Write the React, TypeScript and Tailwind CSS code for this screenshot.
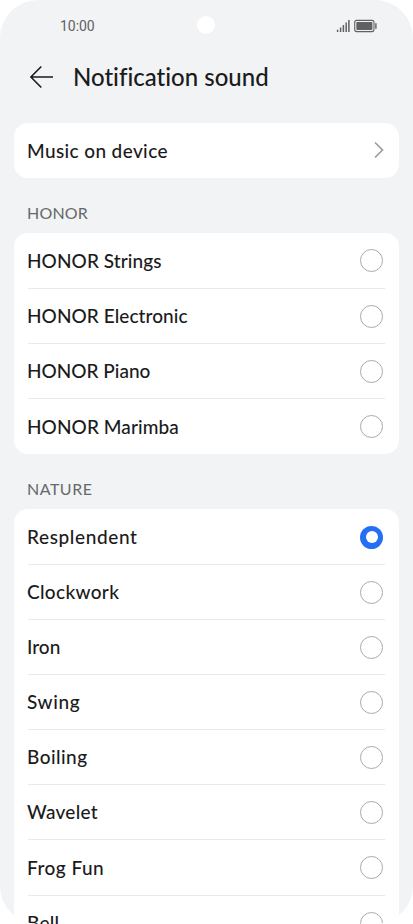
const groups = [
  {
    title: 'HONOR',
    track: 'tracking-[0.2px]',
    items: [
      { name: 'HONOR Strings', track: 'tracking-[0.08px]' },
      { name: 'HONOR Electronic', track: 'tracking-[0.06px]' },
      { name: 'HONOR Piano', track: '' },
      { name: 'HONOR Marimba', track: 'tracking-[0.08px]' },
    ],
  },
  {
    title: 'NATURE',
    track: 'tracking-[0.5px]',
    items: [
      { name: 'Resplendent', track: 'tracking-[0.62px]' },
      { name: 'Clockwork', track: 'tracking-[0.33px]' },
      { name: 'Iron', track: '' },
      { name: 'Swing', track: 'tracking-[0.6px]' },
      { name: 'Boiling', track: 'tracking-[0.45px]' },
      { name: 'Wavelet', track: 'tracking-[0.28px]' },
      { name: 'Frog Fun', track: 'tracking-[0.48px]' },
      { name: 'Bell', track: 'tracking-[0.2px]' },
    ],
  },
];

function StatusBar() {
  return (
    <header className="relative flex h-[50px] items-center justify-between pl-[60px] pr-[36px] text-[#606163]">
      <span className="pt-[2px] font-['Roboto',sans-serif] text-[14px] font-normal leading-5 tracking-[-0.05px]">10:00</span>
      <span className="absolute left-[197px] top-[16px] size-[18px] rounded-full bg-white" />
      <svg className="mt-[2px]" width="41" height="14" viewBox="0 0 41 14" fill="none">
        <path d="M1.6 10.7V13M4.6 8.5V13M7.4 6V13M10.2 3.5V13M12.9 1V13" stroke="currentColor" strokeWidth="1.5" />
        <rect x="18.7" y="1.4" width="19.3" height="11.2" rx="2" stroke="currentColor" strokeWidth="1.1" />
        <rect x="20.3" y="3.1" width="16.1" height="7.8" rx="0.8" fill="currentColor" />
        <path d="M39.9 4.2V9.8" stroke="currentColor" strokeWidth="1.4" />
      </svg>
    </header>
  );
}

function Radio({ checked }: { checked: boolean }) {
  return checked ? (
    <span className="mt-[0.7px] flex size-[23px] shrink-0 items-center justify-center rounded-full bg-[#256ff5]">
      <span className="size-[12px] rounded-full bg-white" />
    </span>
  ) : (
    <span className="mt-[0.7px] size-[23px] shrink-0 rounded-full border border-[#aaaaaa]" />
  );
}

export default function App() {
  return (
    <div className="h-[924px] w-[413px] overflow-hidden bg-white">
      <main className="h-full overflow-hidden rounded-[38px] bg-[#f1f3f5] font-['Lato',sans-serif] text-[19px] font-medium text-[#1b1b1c] [font-variant-ligatures:none]">
        <StatusBar />
        <div className="flex h-[73px] items-start pl-[29px] pt-[11px]">
          <svg className="mt-[4px]" width="25" height="24" viewBox="0 0 25 24" fill="none">
            <path d="M12.3 1.5L1.9 12L12.3 22.5M1.9 12H24" stroke="currentColor" strokeWidth="1.6" />
          </svg>
          <h1 className="ml-[19px] text-[24px] leading-8">Notification sound</h1>
        </div>
        <div className="mx-[14px] flex h-[55px] items-center justify-between rounded-[14px] bg-white pl-[13px] pr-[14px]">
          <span className="pt-px tracking-[0.38px]">Music on device</span>
          <svg className="-mt-px" width="12" height="18" viewBox="0 0 12 18" fill="none">
            <path d="M2 1.5L9.5 9L2 16.5" stroke="#999" strokeWidth="1.6" />
          </svg>
        </div>
        {groups.map((group) => (
          <section key={group.title} className="mx-[14px]">
            <h2 className={'flex h-[55.4px] items-end pb-[8px] pl-[13px] text-[16px] font-normal leading-6 text-[#67686a] ' + group.track}>
              {group.title}
            </h2>
            <ul className="rounded-[14px] bg-white px-[14px] pt-[0.2px]">
              {group.items.map((item) => (
                <li key={item.name} className="flex h-[55.14px] items-center justify-between border-b border-[#e9e9e9] pr-[2px] last:border-b-0">
                  <span className={'-ml-px pt-[0.6px] ' + item.track}>{item.name}</span>
                  <Radio checked={item.name === 'Resplendent'} />
                </li>
              ))}
            </ul>
          </section>
        ))}
      </main>
    </div>
  );
}
